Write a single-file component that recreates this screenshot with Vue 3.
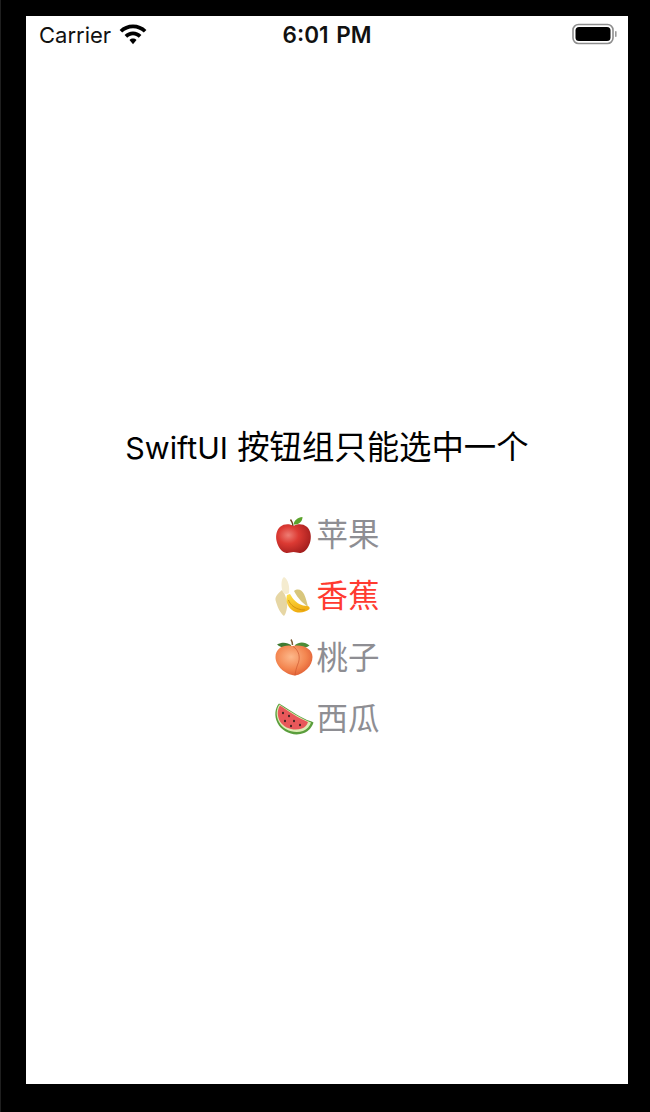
<template>
  <div class="frame">
    <div class="screen">
      <!-- status bar -->
      <div class="status-bar">
        <div class="status-left">
          <span class="carrier">Carrier</span>
          <svg class="wifi" width="28" height="21" viewBox="0 0 28 21">
            <path d="M14 0.5C8.8 0.5 4.2 2.5 0.6 5.9L3.2 8.6C6.1 5.9 9.8 4.3 14 4.3S21.9 5.9 24.8 8.6L27.4 5.9C23.8 2.5 19.2 0.5 14 0.5Z" fill="#000"/>
            <path d="M14 7.6C10.8 7.6 7.9 8.8 5.6 11L8.2 13.7C9.8 12.2 11.8 11.3 14 11.3S18.2 12.2 19.8 13.7L22.4 11C20.1 8.8 17.2 7.6 14 7.6Z" fill="#000"/>
            <path d="M14 14.6C12.7 14.6 11.5 15.1 10.5 16L14 20.2L17.5 16C16.5 15.1 15.3 14.6 14 14.6Z" fill="#000"/>
          </svg>
        </div>
        <span class="time">6:01 PM</span>
        <svg class="battery" width="46" height="22" viewBox="0 0 46 22">
          <rect x="1" y="1.5" width="40" height="19" rx="5.5" fill="none" stroke="#8e8e8e" stroke-width="1.6"/>
          <rect x="3.5" y="4" width="35" height="14" rx="3.5" fill="#000"/>
          <rect x="43" y="8" width="1.6" height="6" rx="0.8" fill="#9a9a9a"/>
        </svg>
      </div>

      <!-- content -->
      <div class="content">
        <div class="title"><span class="latin">SwiftUI</span> 按钮组只能选中一个</div>
        <div class="fruit-list">
          <div
            v-for="fruit in fruits"
            :key="fruit.id"
            class="fruit"
            :class="{ selected: fruit.id === selected }"
            @click="selected = fruit.id"
          >
            <svg v-if="fruit.id === 'apple'" class="emoji" width="40" height="40" viewBox="0 0 40 40">
              <defs>
                <radialGradient id="appleFill" cx="0.35" cy="0.38" r="0.75">
                  <stop offset="0" stop-color="#ee7d74"/>
                  <stop offset="0.4" stop-color="#dc3a33"/>
                  <stop offset="1" stop-color="#9c1a1a"/>
                </radialGradient>
              </defs>
              <path d="M19.5 12C16 9.6 10 9.4 6.2 12.8C2.6 16 1.4 21.5 2.6 27C3.9 33 7.6 38.6 12.5 39C15.2 39.2 17 38 19.5 38S23.8 39.2 26.5 39C31.4 38.6 35.1 33 36.4 27C37.6 21.5 36.4 16 32.8 12.8C29 9.4 23 9.6 19.5 12Z" fill="url(#appleFill)"/>
              <path d="M19 12C18.8 9.5 18 7.5 16.5 5.5" fill="none" stroke="#6b3d1d" stroke-width="1.4"/>
              <path d="M19.5 10.5C20 6.5 23.5 3.5 28.5 3C28.5 7.5 25 11 19.5 10.5Z" fill="#5ba32c"/>
            </svg>

            <svg v-else-if="fruit.id === 'banana'" class="emoji" width="40" height="40" viewBox="0 0 40 40">
              <defs>
                <linearGradient id="bananaFill" x1="0" y1="0" x2="0.3" y2="1">
                  <stop offset="0" stop-color="#ffe24d"/>
                  <stop offset="1" stop-color="#f0ae12"/>
                </linearGradient>
              </defs>
              <path d="M8 14C4 17 1 21 1.5 24C3 30 6 37 10 40C12 38 13 33 13.5 27C12 22 11 17 8 14Z" fill="#e6d6a4"/>
              <path d="M10 1C7 3 7 10 8.5 15C9 18 13 19 15 17C16 11 14 3 10 1Z" fill="#f5ecd0"/>
              <path d="M20 15C24 12 28 14 30 18C32 22 33 27 34 31C30 28 24 23 20 15Z" fill="#d8c67c"/>
              <path d="M13 19C11.5 24 13 30 18 34C23 38 31 37 35.5 33C36 31 35 30 33 30C28 30 22 27 18.5 22L16 18Z" fill="url(#bananaFill)"/>
              <path d="M14.5 24C16 29 22 34 31 34" fill="none" stroke="#c98c0e" stroke-width="0.8"/>
            </svg>

            <svg v-else-if="fruit.id === 'peach'" class="emoji" width="40" height="40" viewBox="0 0 40 40">
              <defs>
                <radialGradient id="peachFill" cx="0.42" cy="0.38" r="0.75">
                  <stop offset="0" stop-color="#fdb98c"/>
                  <stop offset="0.55" stop-color="#f3854f"/>
                  <stop offset="1" stop-color="#d94f2a"/>
                </radialGradient>
              </defs>
              <path d="M17 8C14 5.5 8 4.5 3 7.5C7 11 12 11.5 17 10Z" fill="#3f7a32"/>
              <path d="M21 8C25 4.5 31 4.5 35.5 8.5C31 11.5 26 11.5 21 10Z" fill="#4d8c38"/>
              <path d="M18.5 8C18.5 6 18 4 17 2.5" fill="none" stroke="#7a5a32" stroke-width="1.4"/>
              <path d="M19 9C11 7 1.5 10.5 1.5 20C1.5 29 11 37.5 21 38.5C30 37 38.5 29 38.5 20C38.5 12 29 7 19 9Z" fill="url(#peachFill)"/>
              <path d="M19 9.5C25 13 27 21 23.5 28C22.5 31 21.5 34 21 38.5" fill="none" stroke="#c9532e" stroke-width="0.9" opacity="0.7"/>
            </svg>

            <svg v-else class="emoji" width="40" height="40" viewBox="0 0 40 40">
              <path d="M5 4.5C1 9 0 17 3.5 24C8 33 20 38 30 34C35 32 38 28 39.5 23.5C37 22 35 21.5 33 21C24 17 14 10 5 4.5Z" fill="#5a9e3c"/>
              <path d="M5.5 5.5C2 10 1.8 17 5 23C9 31 20 35 29 32C33 30.5 36 27 37 23.5C26 19 15 12 5.5 5.5Z" fill="#dcedb4"/>
              <path d="M6 6.5C3 11 3 17 6 22.5C10 29 20 32.5 28 29.5C31 28.5 33 26 34 23C24 19 14 12 6 6.5Z" fill="#e8585a"/>
              <g fill="#3a1f1f">
                <ellipse cx="9" cy="14" rx="1" ry="1.3"/>
                <ellipse cx="15" cy="17" rx="1" ry="1.3"/>
                <ellipse cx="11" cy="22" rx="1" ry="1.3"/>
                <ellipse cx="20" cy="22" rx="1" ry="1.3"/>
                <ellipse cx="17" cy="27" rx="1" ry="1.3"/>
                <ellipse cx="26" cy="26" rx="1" ry="1.3"/>
              </g>
            </svg>
            <span class="label">{{ fruit.name }}</span>
          </div>
        </div>
      </div>
    </div>
  </div>
</template>

<script setup>
import { ref } from 'vue'

const selected = ref('banana')

const fruits = [
  { id: 'apple', name: '苹果' },
  { id: 'banana', name: '香蕉' },
  { id: 'peach', name: '桃子' },
  { id: 'watermelon', name: '西瓜' }
]
</script>

<style>
html, body {
  margin: 0;
  background: #000;
}
</style>

<style scoped>
.frame {
  width: 650px;
  height: 1112px;
  box-sizing: border-box;
  padding: 16px 22px 28px 26px;
  background: #000;
  border-left: 1px solid #1f1f1f;
  font-family: Inter, "Noto Sans CJK SC", sans-serif;
}

.screen {
  width: 602px;
  height: 1068px;
  margin-left: -1px;
  display: flex;
  flex-direction: column;
  background: #fff;
}

.status-bar {
  height: 70px;
  flex-shrink: 0;
  box-sizing: border-box;
  padding: 4px 13px 0;
  display: grid;
  grid-template-columns: 1fr auto 1fr;
  align-items: start;
  color: #000;
}

.status-left {
  display: flex;
  align-items: center;
  gap: 9px;
  height: 30px;
}

.carrier {
  font-size: 22px;
  line-height: 30px;
  color: #111;
}

.wifi {
  margin-top: -2px;
  margin-left: -1px;
}

.time {
  font-size: 22.5px;
  font-weight: 600;
  word-spacing: 2px;
  line-height: 30px;
  color: #111;
}

.battery {
  justify-self: end;
  margin-top: 3px;
  margin-right: -3px;
}

.content {
  flex: 1;
  display: flex;
  flex-direction: column;
  align-items: center;
  justify-content: center;
  padding-bottom: 3px;
}

.title {
  font-size: 32.4px;
  line-height: 40px;
  color: #000;
  white-space: nowrap;
}

.latin {
  font-size: 30.4px;
}

.fruit-list {
  margin-top: 46px;
  display: flex;
  flex-direction: column;
  align-items: center;
  gap: 20px;
}

.fruit {
  height: 41.5px;
  display: flex;
  align-items: center;
  gap: 2px;
  color: #8e8e93;
  cursor: pointer;
}

.fruit.selected {
  color: #ff3b30;
}

.label {
  font-size: 31.5px;
  line-height: 41px;
}
</style>
